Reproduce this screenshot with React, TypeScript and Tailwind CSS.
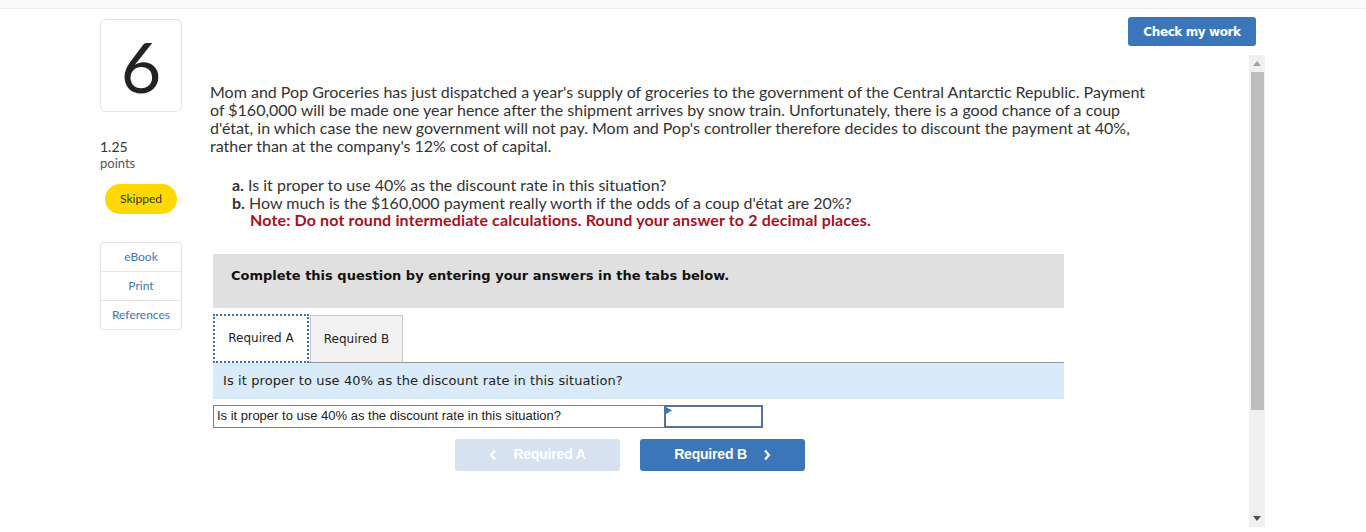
const proxima = "font-['Lato','Open_Sans',sans-serif]";
const verdana = "font-['DejaVu_Sans','Verdana',sans-serif]";
const arial = "font-['Liberation_Sans','Arial',sans-serif]";

function Sidebar() {
  return (
    <div className={`ml-[100px] flex w-[82px] shrink-0 flex-col ${proxima}`}>
      <div className="mt-[10px] flex h-[93px] w-[82px] items-center justify-center rounded-md border border-[#e6e6e6]">
        <span className="text-[70px] leading-none text-[#222]">6</span>
      </div>
      <div className="mt-[27px] text-[14px] leading-[16px] text-[#333]">1.25</div>
      <div className="text-[13px] leading-[16px] text-[#555]">points</div>
      <div className="mt-[13px] ml-[5px] flex h-[30px] w-[72px] items-center justify-center rounded-full bg-[#ffd800] text-[12px] text-[#333]">
        Skipped
      </div>
      <div className="mt-[28px] flex flex-col rounded-[3px] border border-[#e6e6e6] text-[12px] text-[#3e75b5]">
        <div className="flex h-[29px] items-center justify-center border-b border-[#e6e6e6]">eBook</div>
        <div className="flex h-[29px] items-center justify-center border-b border-[#e6e6e6]">Print</div>
        <div className="flex h-[28px] items-center justify-center">References</div>
      </div>
    </div>
  );
}

function Question() {
  return (
    <div className="ml-[28px] flex w-[918px] shrink-0 flex-col">
      <div className={`mt-[74px] text-[16px] leading-[18px] text-[#333] ${proxima}`}>
        <div className="whitespace-nowrap">
          Mom and Pop Groceries has just dispatched a year's supply of groceries to the government of the Central Antarctic Republic. Payment
        </div>
        <div className="whitespace-nowrap">
          of $160,000 will be made one year hence after the shipment arrives by snow train. Unfortunately, there is a good chance of a coup
        </div>
        <div className="whitespace-nowrap">
          d'état, in which case the new government will not pay. Mom and Pop's controller therefore decides to discount the payment at 40%,
        </div>
        <div className="whitespace-nowrap">rather than at the company's 12% cost of capital.</div>
      </div>

      <div className={`mt-[21px] ml-[22px] text-[16px] leading-[17.5px] text-[#333] ${proxima}`}>
        <div className="whitespace-nowrap">
          <b className="font-bold">a.</b> Is it proper to use 40% as the discount rate in this situation?
        </div>
        <div className="whitespace-nowrap">
          <b className="font-bold">b.</b> How much is the $160,000 payment really worth if the odds of a coup d'état are 20%?
        </div>
        <div className="ml-[18px] whitespace-nowrap font-bold tracking-[0.15px] text-[#a8101a]">
          Note: Do not round intermediate calculations. Round your answer to 2 decimal places.
        </div>
      </div>

      <div className="mt-[25px] ml-[3px] w-[851px]">
        <div className={`h-[54px] bg-[#e0e0e0] px-[18px] pt-[14px] text-[13px] leading-[16px] font-bold text-[#111] ${verdana}`}>
          Complete this question by entering your answers in the tabs below.
        </div>

        <div className={`mt-[6px] flex items-end border-b border-[#999] text-[12px] text-[#222] ${verdana}`}>
          <div className="-mb-px flex h-[49px] w-[96px] items-center justify-center border-2 border-dotted border-[#3d6fb6] bg-white">
            Required A
          </div>
          <div className="ml-px flex h-[47px] w-[93px] items-center justify-center border border-b-0 border-[#c6c6c6] bg-[#f2f2f2]">
            Required B
          </div>
        </div>

        <div className={`flex h-[36px] items-center bg-[#d9ebf9] pl-[10px] text-[13px] tracking-[0.1px] text-[#222] ${verdana}`}>
          Is it proper to use 40% as the discount rate in this situation?
        </div>

        <div className="mt-[6px] flex h-[23px]">
          <div className={`flex w-[451px] items-center border border-r-0 border-[#808080] pl-[3px] text-[13px] text-[#222] ${arial}`}>
            Is it proper to use 40% as the discount rate in this situation?
          </div>
          <div className="relative w-[99px] border-2 border-[#56729a] bg-white">
            <svg className="absolute top-0 left-0" width="6" height="7" viewBox="0 0 6 7">
              <path d="M0 0 L6 3.5 L0 7 Z" fill="#3e75b5" />
            </svg>
          </div>
        </div>

        <div className={`mt-[11px] ml-[242px] flex gap-[20px] text-[14px] font-bold text-white ${arial}`}>
          <div className="flex h-[32px] w-[165px] items-center justify-center gap-[16px] rounded-[3px] bg-[#d6e2f0] text-white">
            <svg width="8" height="12" viewBox="0 0 8 12">
              <path d="M6 1.5 L2 6 L6 10.5" stroke="white" strokeWidth="2.2" fill="none" />
            </svg>
            <span className="tracking-[-0.2px]">Required A</span>
          </div>
          <div className="flex h-[32px] w-[165px] items-center justify-center gap-[16px] rounded-[3px] bg-[#3a76b8]">
            <span className="tracking-[-0.2px]">Required B</span>
            <svg width="8" height="12" viewBox="0 0 8 12">
              <path d="M2 1.5 L6 6 L2 10.5" stroke="white" strokeWidth="2.2" fill="none" />
            </svg>
          </div>
        </div>
      </div>
    </div>
  );
}

function Scrollbar() {
  return (
    <div className="flex h-[472px] w-[16px] flex-col items-center bg-[#f0f0f0]">
      <svg className="mt-[6px]" width="8" height="5" viewBox="0 0 8 5">
        <path d="M0 5 L4 0 L8 5 Z" fill="#a3a3a3" />
      </svg>
      <div className="mt-[6px] h-[338px] w-[13px] bg-[#bebebe]" />
      <div className="flex-1" />
      <svg className="mb-[6px]" width="8" height="5" viewBox="0 0 8 5">
        <path d="M0 0 L8 0 L4 5 Z" fill="#505050" />
      </svg>
    </div>
  );
}

export default function App() {
  return (
    <div className="h-[532px] w-[1366px] overflow-hidden bg-white">
      <div className="h-[9px] border-b border-[#ebebeb] bg-[#fafafa]" />
      <div className="flex">
        <Sidebar />
        <Question />
        <div className="flex w-[138px] shrink-0 flex-col">
          <div
            className={`mt-[8px] flex h-[29px] w-[128px] items-center justify-center rounded-[3px] bg-[#3a76b8] text-[12px] font-bold tracking-[-0.4px] text-white ${verdana}`}
          >
            Check my work
          </div>
          <div className="mt-[9px] ml-[121px]">
            <Scrollbar />
          </div>
        </div>
      </div>
    </div>
  );
}
